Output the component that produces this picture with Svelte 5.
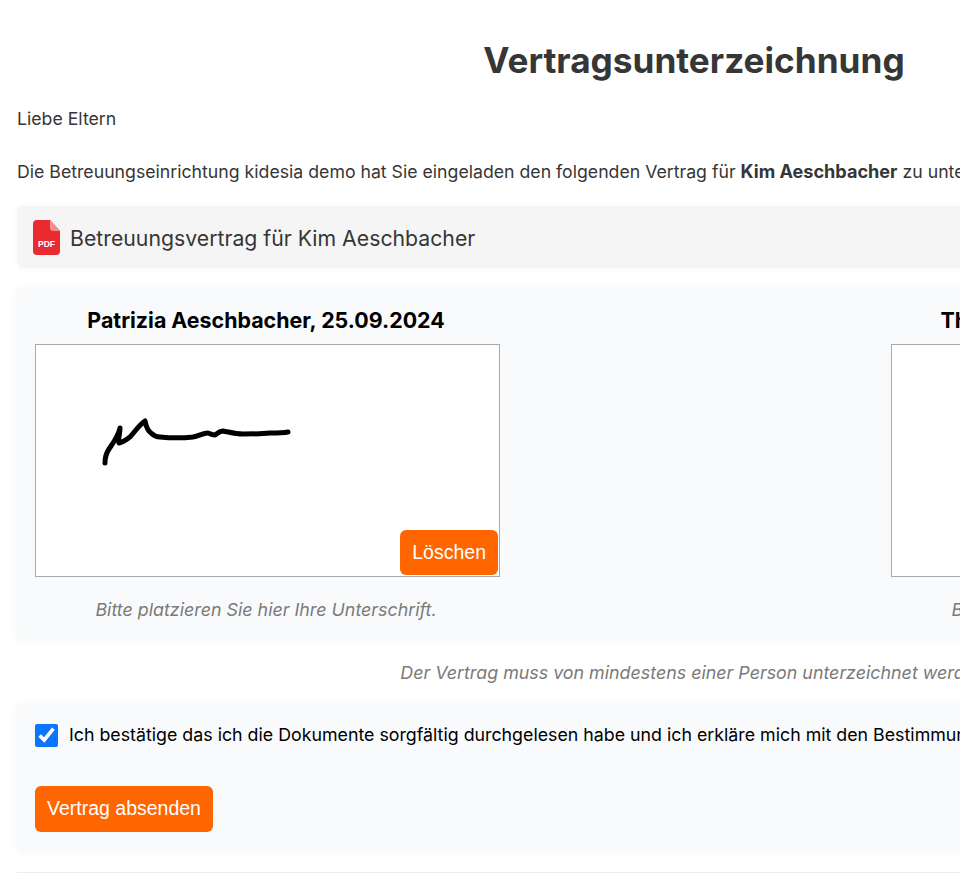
<script lang="ts">
  // Signature rows
  const signers = [
    { name: 'Patrizia Aeschbacher, 25.09.2024', signed: true },
    { name: 'Thomas Aeschbacher, 25.09.2024', signed: false }
  ];
  let accepted = $state(true);
</script>

<main class="page">
  <h1>Vertragsunterzeichnung</h1>
  <p class="greeting">Liebe Eltern</p>
  <p class="intro">Die Betreuungseinrichtung kidesia demo hat Sie eingeladen den folgenden Vertrag für <strong>Kim Aeschbacher</strong> zu unterzeichnen.</p>

  <div class="doc">
    <svg class="pdf" viewBox="0 0 27 35" width="27" height="35" aria-hidden="true">
      <path d="M4 0H17L27 11V31a4 4 0 0 1-4 4H4a4 4 0 0 1-4-4V4a4 4 0 0 1 4-4Z" fill="#e92a30" />
      <path d="M17 0L27 11H20a3 3 0 0 1-3-3Z" fill="#f3908f" />
      <text x="13.5" y="26.5" text-anchor="middle">PDF</text>
    </svg>
    <span class="docName">Betreuungsvertrag für Kim Aeschbacher</span>
  </div>

  <section class="card signatures">
    {#each signers as signer}
      <div class="signer">
        <h2>{signer.name}</h2>
        <div class="pad">
          {#if signer.signed}
            <svg class="stroke" viewBox="0 0 230 80" width="230" height="80" aria-hidden="true">
              <path d="M25 63 C25 56 27 52 29 49 C33 43 38 37 40 28 C40 34 38 38 39 43 C44 42 47 39 50 37 C54 33 58 26 65 21 C66 26 68 31 71 33 C74 36 76 37 80 37 C90 38 104 38 113 37 C119 36 123 33 128 33 C131 34 133 35 135 35 C138 33 140 31 143 31 C149 32 155 34 163 34 C172 34 182 34 190 33 C197 33 203 33 208 32" />
            </svg>
          {/if}
          <button class="action clear">Löschen</button>
        </div>
        <p class="hint">Bitte platzieren Sie hier Ihre Unterschrift.</p>
      </div>
    {/each}
  </section>

  <p class="note">Der Vertrag muss von mindestens einer Person unterzeichnet werden.</p>

  <section class="card confirm">
    <label>
      <input type="checkbox" bind:checked={accepted} />
      <span>Ich bestätige das ich die Dokumente sorgfältig durchgelesen habe und ich erkläre mich mit den Bestimmungen einverstanden.</span>
    </label>
    <button class="action">Vertrag absenden</button>
  </section>

  <hr />
</main>

<style>
  :global(html), :global(body) {
    overflow: hidden;
    background: #fff;
  }

  .page {
    box-sizing: border-box;
    width: 1388px;
    padding: 0 14px 0 17px;
    color: #363636;
    font-family: Inter, "Liberation Sans", sans-serif;
    font-size: 17.7px;
    line-height: 26px;
  }

  h1 {
    margin: 0;
    padding: 38px 3px 0 0;
    text-align: center;
    font-size: 35.2px;
    line-height: 44px;
    font-weight: 700;
  }

  .greeting {
    margin: 24px 0 0;
  }

  .intro {
    margin: 26px 0 0;
  }

  strong {
    font-size: 18.1px;
    font-weight: 700;
  }

  .doc {
    display: flex;
    align-items: center;
    gap: 10px;
    height: 62px;
    margin-top: 21px;
    padding-left: 16px;
    background: #f5f5f5;
    border-radius: 6px;
    box-shadow: 0 0 8px rgba(0, 0, 0, 0.03);
    font-size: 21.25px;
  }

  .docName {
    padding-top: 2px;
  }

  .pdf {
    flex-shrink: 0;
  }

  .pdf text {
    fill: #fff;
    font-size: 8.6px;
    font-weight: 800;
    font-family: "Liberation Sans", sans-serif;
  }

  .card {
    background: #f9fafc;
    border-radius: 6px;
    box-shadow: 0 0 9px rgba(0, 0, 0, 0.05);
  }

  .signatures {
    display: flex;
    justify-content: space-between;
    height: 351px;
    box-sizing: border-box;
    margin-top: 21px;
    padding: 17px 18px 0;
  }

  .signer {
    width: 465px;
  }

  h2 {
    margin: 0 0 9px;
    padding-right: 3px;
    text-align: center;
    color: #000;
    font-size: 21.4px;
    line-height: 29px;
    font-weight: 700;
  }

  .pad {
    position: relative;
    box-sizing: border-box;
    height: 233px;
    background: #fff;
    border: 1px solid #a8a8a8;
  }

  .stroke {
    position: absolute;
    left: 44px;
    top: 55px;
  }

  .stroke path {
    fill: none;
    stroke: #000;
    stroke-width: 5;
    stroke-linecap: round;
    stroke-linejoin: round;
  }

  .action {
    display: block;
    height: 45.5px;
    padding: 0 12px;
    color: #fff;
    background: #ff6600;
    border: 0;
    border-radius: 6px;
    font-family: "Liberation Sans", Arial, sans-serif;
    font-size: 19.5px;
  }

  .clear {
    position: absolute;
    right: 1px;
    bottom: 1px;
  }

  .hint,
  .note {
    text-align: center;
    color: #7a7a7a;
    font-size: 17.85px;
    font-style: italic;
  }

  .hint {
    margin: 20px 0 0;
    padding-right: 3px;
  }

  .note {
    margin: 20px 0 0;
  }

  .confirm {
    margin-top: 19px;
    height: 146px;
    box-sizing: border-box;
    padding: 17px 18px 0;
  }

  label {
    display: flex;
    align-items: center;
    gap: 11px;
    color: #000;
    font-size: 17.8px;
    white-space: nowrap;
  }

  input {
    width: 23px;
    height: 23px;
    margin: 0;
    accent-color: #0a75ff;
  }

  .confirm .action {
    margin-top: 38px;
  }

  hr {
    height: 1px;
    margin: 21px 0 0;
    background: #ececec;
    border: 0;
  }
</style>
